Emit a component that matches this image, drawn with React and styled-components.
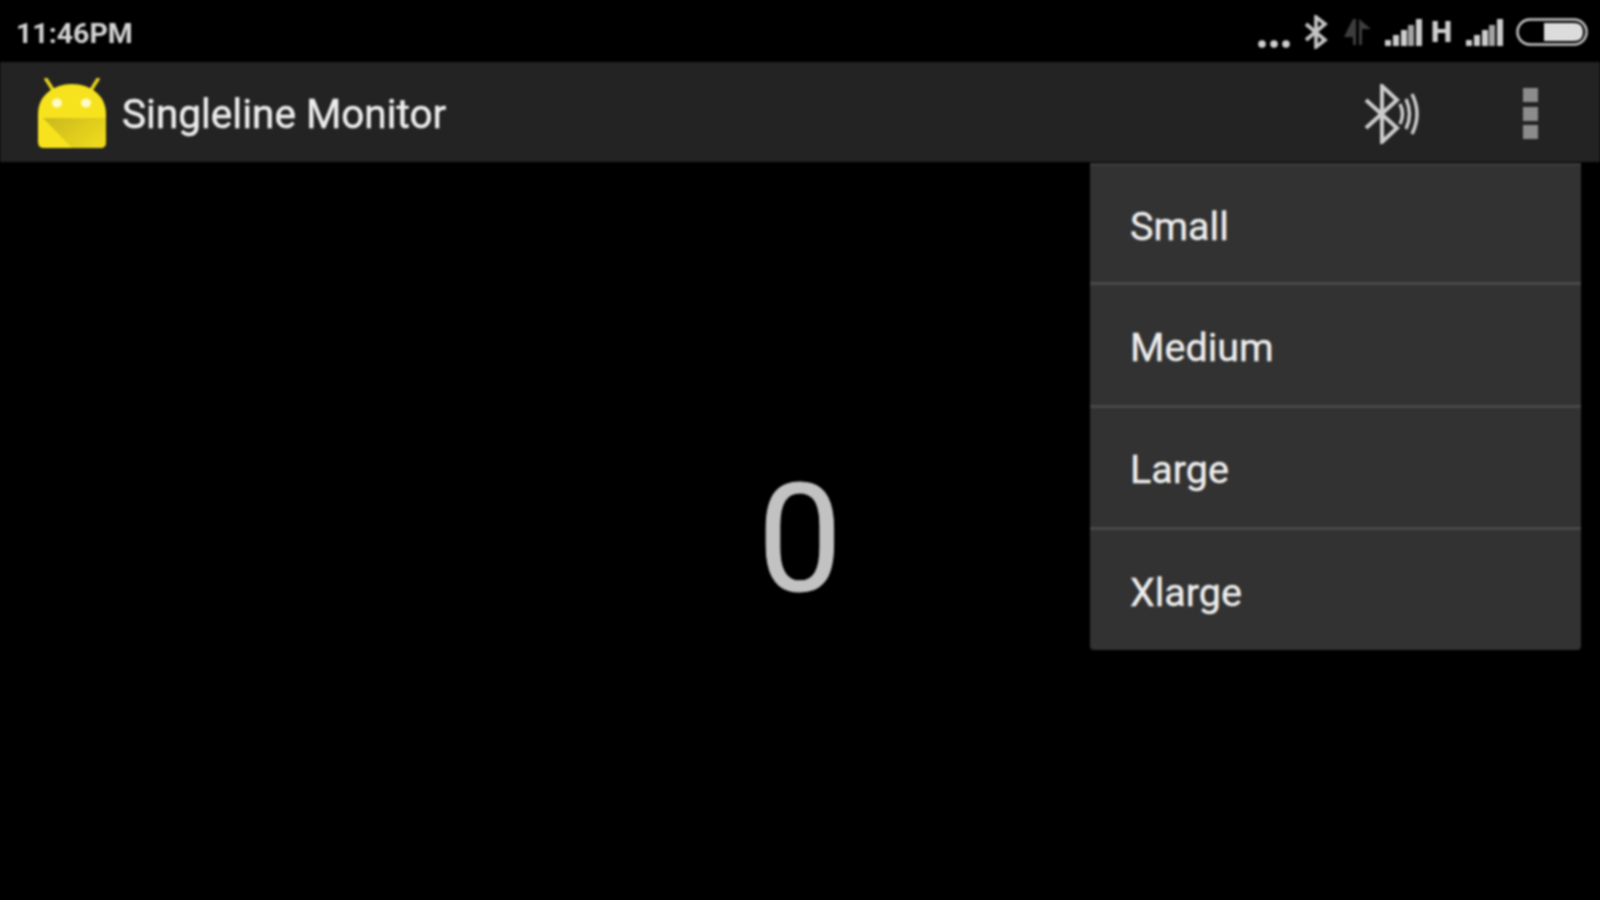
import styled, { createGlobalStyle } from "styled-components";

const GlobalStyle = createGlobalStyle`
    html, body { margin : 0; padding : 0; background : #000; }
    body { font-family : Roboto, "Liberation Sans", sans-serif; overflow : hidden; }
`;
const Screen = styled.div`
    position : relative; width : 1600px; height : 900px;
    display : flex; flex-direction : column;
    background : #000; overflow : hidden;
`;
const Blurred = styled.div`
    position : relative; flex : 1;
    display : flex; flex-direction : column;
    filter : blur(0.8px);
`;
const StatusBar = styled.div`
    height : 62px; flex : none;
    display : flex; align-items : center; justify-content : space-between;
    padding : 2px 12px 0 16px; box-sizing : border-box;
`;
const Clock = styled.span`
    color : #d4d4d4; font-size : 28.5px; font-weight : 700;
    position : relative; top : 1px;
`;
const Tray = styled.div`
    display : flex; align-items : center; height : 100%;
`;
const TrayIcon = styled.svg`
    display : block; flex : none;
    margin-left : ${(props) => props.$gap}px;
`;
const Dots = styled(TrayIcon)`
    align-self : flex-end; margin-bottom : 14px;
`;
const NetworkType = styled.span`
    color : #cfcfcf; font-size : 30px; font-weight : 900; line-height : 1;
    margin-left : 9px;
`;
const ActionBar = styled.div`
    height : 100px; flex : none;
    display : flex; align-items : center;
    padding : 4px 0 0 37px; box-sizing : border-box;
    background : #232323;
`;
const Logo = styled.svg`
    display : block; flex : none;
`;
const Title = styled.h1`
    margin : 0 0 0 15px; flex : 1;
    color : #ececec; font-size : 40.5px; font-weight : 400; line-height : 1;
    -webkit-text-stroke : 0.5px #ececec;
`;
const ActionIcon = styled.svg`
    display : block; flex : none;
    margin-right : ${(props) => props.$right}px;
`;
const Content = styled.main`
    flex : 1; display : flex; align-items : center; justify-content : center;
    padding-top : 17px;
`;
const Counter = styled.span`
    color : #c2c2c2; font-size : 150px; line-height : 1;
    -webkit-text-stroke : 1px #c2c2c2;
`;
const Menu = styled.ul`
    position : absolute; top : 163px; right : 19px;
    width : 491px; margin : 0; padding : 0;
    list-style : none; background : #323232;
    border-radius : 0 0 4px 4px;
`;
const MenuItem = styled.li`
    height : ${(props) => (props.$first ? 119 : 122.67)}px; box-sizing : border-box;
    display : flex; align-items : center;
    padding : 5px 0 0 40px;
    color : #ededed; font-size : 39.5px;
    -webkit-text-stroke : 0.4px #ededed;
    border-top : 3px solid ${(props) => (props.$first ? "#3a3a3a" : "#484848")};
`;

const AndroidLogo = () => (
    <Logo width="70" height="72" viewBox="0 0 70 72">
        <defs>
            <linearGradient id="fold" x1="0" y1="0" x2="1" y2="0.6">
                <stop offset="0" stopColor="#c9b81e" />
                <stop offset="1" stopColor="#ecd81c" />
            </linearGradient>
        </defs>
        <path d="M9 1 L16 12 M61 1 L54 12" stroke="#e6d51c" strokeWidth="3.5" strokeLinecap="round" />
        <path d="M1 36 C1 17 17 6 35 6 C53 6 69 17 69 36 L69 64 Q69 70 63 70 L7 70 Q1 70 1 64 Z" fill="#f7e31d" />
        <path d="M6 40 L69 40 L69 64 Q69 70 63 70 L35 70 Z" fill="url(#fold)" />
        <ellipse cx="20" cy="25" rx="5" ry="4.5" fill="#fffbc8" />
        <ellipse cx="49" cy="25" rx="5" ry="4.5" fill="#fffbc8" />
    </Logo>
);

const StatusBluetooth = () => (
    <TrayIcon $gap={14} width="24" height="34" viewBox="0 0 24 34" fill="none" stroke="#c4c4c4" strokeWidth="3.6">
        <path d="M2 9 L21 25 L12 32 L12 2 L21 9 L2 25" />
    </TrayIcon>
);
const DataArrows = () => (
    <TrayIcon $gap={14} width="30" height="30" viewBox="0 0 30 30" fill="#3d3d3d">
        <path d="M11 2 H14 V28 H11 V20 H2 Z" />
        <path d="M17 2 V28 H20 V12 H29 Z" />
    </TrayIcon>
);
const Signal = ({ gap }) => (
    <TrayIcon $gap={gap} width="37" height="30" viewBox="0 0 37 30" fill="#cccccc">
        <rect x="0" y="23" width="6" height="6" />
        <rect x="8" y="18" width="6" height="11" />
        <rect x="16" y="13" width="6" height="16" />
        <rect x="23" y="8" width="6" height="21" opacity="0.8" />
        <rect x="31" y="2" width="6" height="27" />
    </TrayIcon>
);
const Battery = () => (
    <TrayIcon $gap={13} width="72" height="28" viewBox="0 0 72 28">
        <rect x="1.5" y="1.5" width="69" height="25" rx="12.5" fill="none" stroke="#c4c4c4" strokeWidth="2.5" />
        <path d="M28 5 H58 Q67 5 67 14 Q67 23 58 23 H28 Z" fill="#dcdcdc" />
    </TrayIcon>
);

const sizes = ["Small", "Medium", "Large", "Xlarge"];

const App = () => {
    return (<>
        <GlobalStyle />
        <Screen>
            <Blurred>
                <StatusBar>
                    <Clock>11:46PM</Clock>
                    <Tray>
                        <Dots $gap={0} width="32" height="8" viewBox="0 0 32 8" fill="#d0d0d0">
                            <circle cx="4" cy="4" r="3.8" />
                            <circle cx="16" cy="4" r="3.8" />
                            <circle cx="28" cy="4" r="3.8" />
                        </Dots>
                        <StatusBluetooth />
                        <DataArrows />
                        <Signal gap={13} />
                        <NetworkType>H</NetworkType>
                        <Signal gap={14} />
                        <Battery />
                    </Tray>
                </StatusBar>
                <ActionBar>
                    <AndroidLogo />
                    <Title>Singleline Monitor</Title>
                    <ActionIcon $right={101} width="58" height="60" viewBox="0 0 58 60" fill="none" stroke="#cccccc">
                        <path d="M2 16 L33 44 L18 58 L18 2 L33 16 L2 44" strokeWidth="4" />
                        <path d="M36 20 Q41 30 36 40" strokeWidth="3.5" />
                        <path d="M42 15 Q49 30 42 45" strokeWidth="3.5" />
                        <path d="M48 10 Q58 30 48 50" strokeWidth="3.5" />
                    </ActionIcon>
                    <ActionIcon $right={61} width="16" height="52" viewBox="0 0 16 52" fill="#8c8c8c">
                        <rect x="0" y="0" width="15" height="14" />
                        <rect x="0" y="19" width="15" height="14" />
                        <rect x="0" y="37" width="15" height="14" />
                    </ActionIcon>
                </ActionBar>
                <Content>
                    <Counter>0</Counter>
                </Content>
                <Menu>
                    {sizes.map((s, i) => <MenuItem key={s} $first={i === 0}>{s}</MenuItem>)}
                </Menu>
            </Blurred>
        </Screen>
    </>);
};
export default App;
